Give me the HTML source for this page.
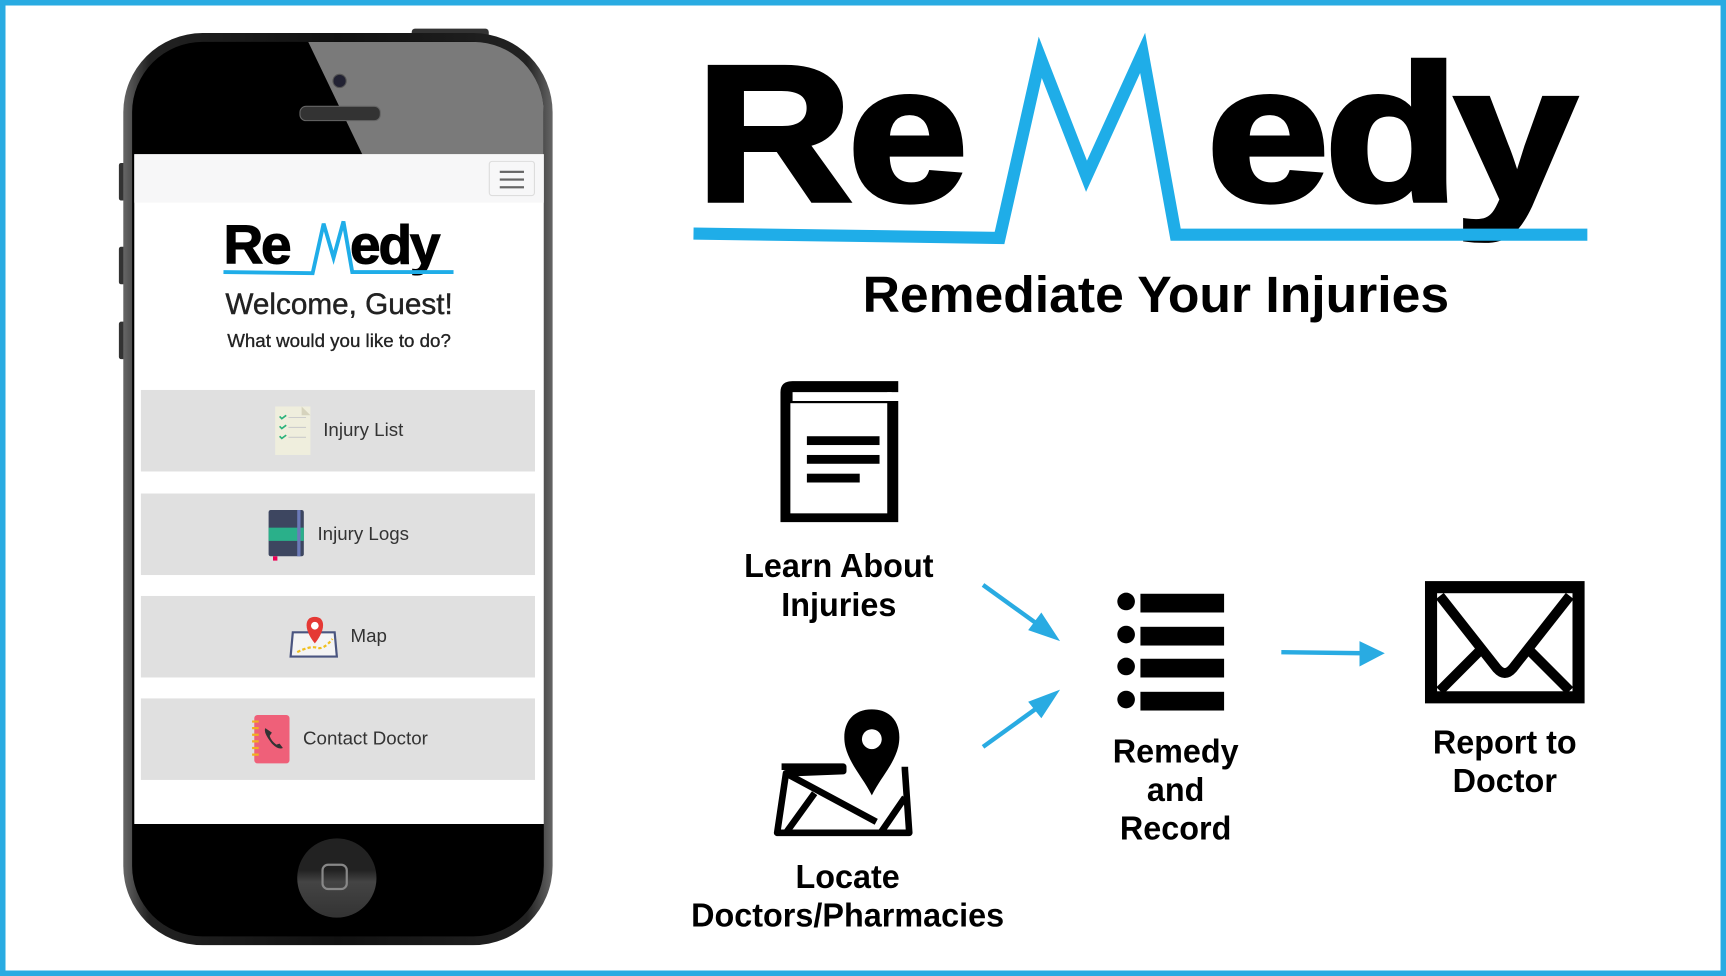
<!DOCTYPE html>
<html><head><meta charset="utf-8"><style>
html,body{margin:0;padding:0;width:1726px;height:976px;overflow:hidden;background:#fff}
#w{position:absolute;left:0;top:0;width:1568px;height:886px;transform:scale(1.1008,1.1016);transform-origin:0 0;font-family:"Liberation Sans",sans-serif}
.a{position:absolute}
.btn{position:absolute;left:128px;width:358px;height:74px;background:#e0e0e0;font-size:17px;color:#333;display:flex;align-items:center;justify-content:center;gap:10px}
.lbl{position:absolute;font-weight:bold;font-size:30px;text-align:center;line-height:35px;color:#000;transform:scaleX(0.98)}
</style></head><body><div id="w">
<div class="a" style="left:0;top:0;width:1558px;height:876px;border:5px solid #29abe2"></div>

<!-- phone -->
<div class="a" style="left:108px;top:148px;width:6px;height:34px;background:#333;border-radius:2px"></div>
<div class="a" style="left:108px;top:224px;width:6px;height:34px;background:#333;border-radius:2px"></div>
<div class="a" style="left:108px;top:292px;width:6px;height:34px;background:#333;border-radius:2px"></div>
<div class="a" style="left:374px;top:26px;width:70px;height:8px;background:#333;border-radius:3px"></div>
<div class="a" style="left:112px;top:30px;width:390px;height:828px;border-radius:72px;background:linear-gradient(90deg,#666,#222 6%,#111 50%,#222 94%,#666);"></div>
<div class="a" style="left:120px;top:38px;width:374px;height:812px;border-radius:64px;background:#000;overflow:hidden">
 <svg width="374" height="110" style="position:absolute;left:0;top:0"><polygon points="160,0 374,0 374,104 210,104" fill="#7a7a7a"/></svg>
</div>
<div class="a" style="left:302px;top:67px;width:11px;height:11px;border-radius:50%;background:#223;border:1px solid #555"></div>
<div class="a" style="left:272px;top:96px;width:72px;height:12px;border-radius:6px;background:#333;border:1px solid #666"></div>
<!-- screen -->
<div class="a" style="left:122px;top:140px;width:372px;height:608px;background:#fff"></div>
<div class="a" style="left:122px;top:140px;width:372px;height:44px;background:#f7f7f8"></div>
<div class="a" style="left:444px;top:146px;width:42px;height:32px;border:1px solid #ddd;border-radius:3px;box-sizing:border-box"></div>
<div class="a" style="left:454px;top:155px;width:22px;height:1.5px;background:#666;box-shadow:0 7px 0 #666,0 14px 0 #666"></div>
<!-- small logo -->
<div class="a" style="left:203px;top:194px;font-size:50px;font-weight:bold;letter-spacing:-2px;line-height:56px;-webkit-text-stroke:1px #000">Re</div>
<div class="a" style="left:318px;top:194px;font-size:50px;font-weight:bold;letter-spacing:-2px;line-height:56px;-webkit-text-stroke:1px #000">edy</div>
<svg class="a" style="left:0;top:0" width="600" height="300"><polyline points="203,247 284,248 294,203 303,234 312,201 320,247 412,247" fill="none" stroke="#1fade8" stroke-width="3.5"/></svg>
<div class="a" style="left:122px;top:261px;width:372px;text-align:center;font-size:27px;color:#222;-webkit-text-stroke:0.4px #222">Welcome, Guest!</div>
<div class="a" style="left:122px;top:300px;width:372px;text-align:center;font-size:17px;color:#222;-webkit-text-stroke:0.3px #222">What would you like to do?</div>

<div class="btn" style="top:354px"><svg width="36" height="48"><rect x="2" y="2" width="32" height="44" fill="#efeedd"/><polygon points="26,2 34,10 26,10" fill="#d6d3bd"/><path d="M6 11l2 2 4-3M6 20l2 2 4-3M6 29l2 2 4-3" stroke="#2ab27b" stroke-width="1.5" fill="none"/><path d="M14 12h16M14 21h16M14 30h16" stroke="#ccc"/></svg>Injury List</div>
<div class="btn" style="top:448px"><svg width="36" height="48"><rect x="2" y="2" width="32" height="42" rx="2" fill="#3d4660"/><rect x="2" y="18" width="32" height="12" fill="#2ab08a"/><rect x="28" y="2" width="3" height="42" fill="#6b7ab8"/><rect x="6" y="44" width="4" height="4" fill="#e05"/></svg>Injury Logs</div>
<div class="btn" style="top:541px"><svg width="46" height="44"><polygon points="4,18 42,18 44,40 2,40" fill="#f4f4f4" stroke="#4a5580" stroke-width="2"/><path d="M8 36 Q20 30 26 32 T40 24" stroke="#f0c020" stroke-dasharray="3 2" fill="none" stroke-width="2"/><path d="M24 28 C14 16 14 4 24 4 C34 4 34 16 24 28z" fill="#e53935"/><circle cx="24" cy="12" r="3.5" fill="#fff"/></svg>Map</div>
<div class="btn" style="top:634px"><svg width="40" height="48"><rect x="6" y="2" width="32" height="44" rx="3" fill="#ef6079"/><path d="M4 8h6M4 14h6M4 20h6M4 26h6M4 32h6M4 38h6" stroke="#f0b020" stroke-width="2"/><path d="M16 14 q-2 4 6 14 q6 6 10 4 l-3 -4 -3 1 q-5 -4 -6 -8 l2 -3z" fill="#333"/></svg>Contact Doctor</div>

<!-- home -->
<div class="a" style="left:270px;top:761px;width:72px;height:72px;border-radius:50%;background:linear-gradient(#222 40%,#444 55%,#333)"></div>
<div class="a" style="left:292px;top:784px;width:24px;height:24px;border:2px solid #888;border-radius:6px;box-sizing:border-box"></div>

<!-- big logo -->
<div class="a" style="left:632px;top:22px;font-size:176px;font-weight:bold;line-height:200px;letter-spacing:-4px;transform:scaleX(1.12);transform-origin:0 0;-webkit-text-stroke:4px #000">Re</div>
<div class="a" style="left:1096px;top:22px;font-size:176px;font-weight:bold;line-height:200px;letter-spacing:-4px;transform:scaleX(1.14);transform-origin:0 0;-webkit-text-stroke:4px #000">edy</div>
<svg class="a" style="left:0;top:0" width="1568" height="300"><polyline points="630,212 908,216 945,52 987,160 1038,48 1068,213 1442,213" fill="none" stroke="#1fade8" stroke-width="11" stroke-linejoin="miter"/></svg>
<div class="a" style="left:650px;top:240px;width:800px;text-align:center;font-size:46px;font-weight:bold;transform:scaleX(1.02)">Remediate Your Injuries</div>

<!-- book -->
<svg class="a" style="left:700px;top:340px" width="130" height="140"><path d="M9 134V16 Q9 6 20 6 H116 V16 H20 V24 H116 V134 Z" fill="#000"/><rect x="18" y="26" width="88" height="100" fill="#fff"/><rect x="106" y="16" width="4" height="8" fill="#fff"/><rect x="33" y="56" width="66" height="8"/><rect x="33" y="73" width="66" height="8"/><rect x="33" y="90" width="48" height="8"/></svg>
<div class="lbl" style="left:640px;top:497px;width:244px">Learn About<br>Injuries</div>
<!-- map -->
<svg class="a" style="left:700px;top:640px" width="140" height="125"><path d="M92 4 C72 4 64 20 68 38 C72 54 84 66 92 82 C100 66 112 54 116 38 C120 20 112 4 92 4Z" fill="#000"/><circle cx="92" cy="31" r="9" fill="#fff"/><path d="M10 56 L66 56 L66 60 L14 62 L6 116 L126 116 L122 58 L122 56" fill="none" stroke="#000" stroke-width="6" stroke-linejoin="round"/><path d="M14 62 L96 106 M40 80 L14 116 M122 84 L100 116" stroke="#000" stroke-width="6"/></svg>
<div class="lbl" style="left:600px;top:779px;width:340px">Locate<br>Doctors/Pharmacies</div>
<!-- arrows -->
<svg class="a" style="left:0;top:0" width="1568" height="886"><g stroke="#29abe2" stroke-width="4" fill="#29abe2"><line x1="893" y1="531" x2="950" y2="572"/><polygon points="963,582 934,572 946,556" stroke="none"/><line x1="893" y1="678" x2="950" y2="637"/><polygon points="963,626 946,652 934,637" stroke="none"/><line x1="1164" y1="592" x2="1240" y2="593"/><polygon points="1258,593 1235,582 1235,605" stroke="none"/></g></svg>
<!-- list -->
<svg class="a" style="left:1010px;top:535px" width="110" height="115"><g fill="#000"><ellipse cx="13" cy="11" rx="8" ry="8"/><rect x="26" y="4" width="76" height="17"/><ellipse cx="13" cy="41" rx="8" ry="8"/><rect x="26" y="34" width="76" height="17"/><ellipse cx="13" cy="70" rx="8" ry="8"/><rect x="26" y="63" width="76" height="17"/><ellipse cx="13" cy="100" rx="8" ry="8"/><rect x="26" y="93" width="76" height="17"/></g></svg>
<div class="lbl" style="left:968px;top:665px;width:200px">Remedy<br>and<br>Record</div>
<!-- envelope -->
<svg class="a" style="left:1294px;top:527px" width="148" height="112"><rect x="6" y="6" width="134" height="100" fill="#fff" stroke="#000" stroke-width="11"/><path d="M14 14 L66 80 Q73 88 80 80 L132 14" fill="none" stroke="#000" stroke-width="9" stroke-linejoin="round"/><path d="M14 100 L54 60 M132 100 L92 60" fill="none" stroke="#000" stroke-width="9"/></svg>
<div class="lbl" style="left:1267px;top:657px;width:200px">Report to<br>Doctor</div>
</div></body></html>
